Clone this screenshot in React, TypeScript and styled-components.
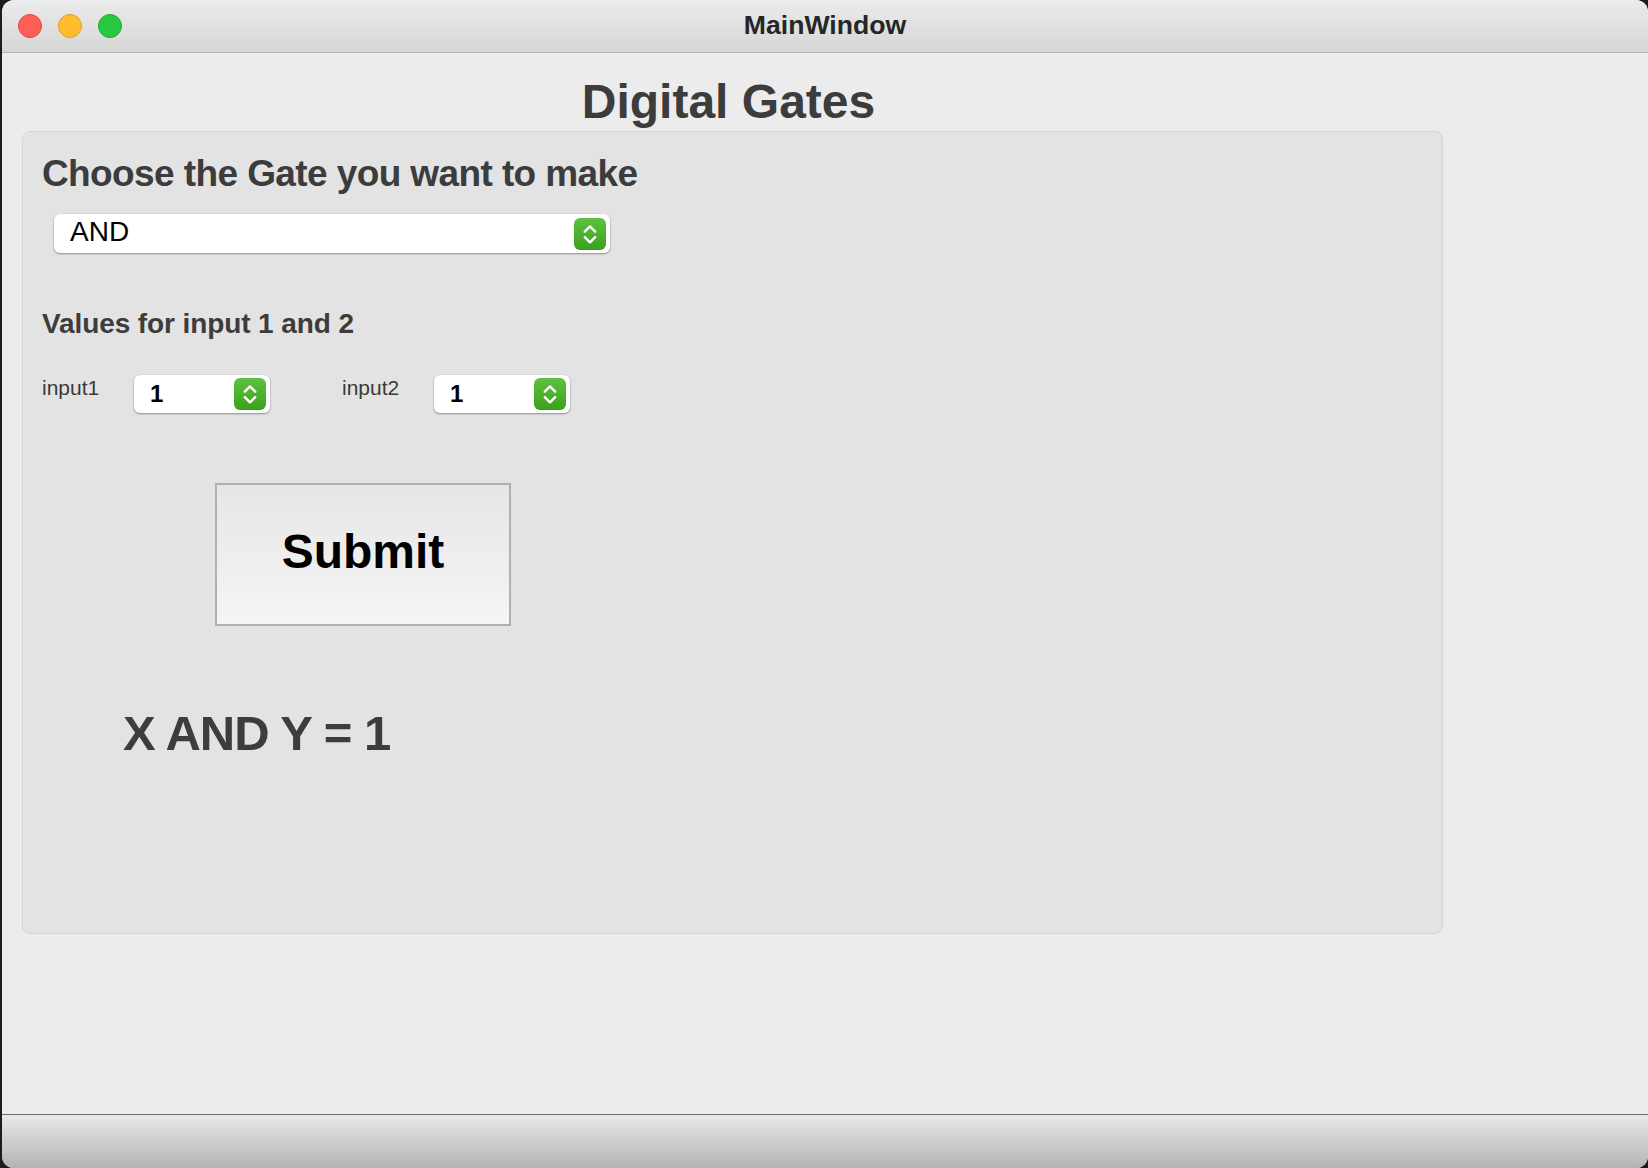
import React from 'react';
import styled, { createGlobalStyle } from 'styled-components';

const GlobalStyle = createGlobalStyle`
  html, body {
    margin: 0;
    padding: 0;
    background: #1c1c1c;
  }
  body {
    width: 1648px;
    height: 1168px;
    overflow: hidden;
    font-family: "Liberation Sans", Arial, Helvetica, sans-serif;
  }
  * { box-sizing: border-box; }
`;

const Desktop = styled.div`
  width: 1648px;
  height: 1168px;
  display: flex;
  padding-left: 2px;
  background: #1c1c1c;
`;

const Window = styled.div`
  flex: 1;
  display: flex;
  flex-direction: column;
  border-radius: 12px;
  overflow: hidden;
  background: #ececec;
`;

const TitleBar = styled.div`
  height: 53px;
  flex: none;
  display: grid;
  grid-template-columns: 1fr auto 1fr;
  align-items: center;
  padding: 0 16px 1px;
  background: linear-gradient(#ebebeb, #d6d6d6);
  border-bottom: 1px solid #b6b6b6;
`;

const Lights = styled.div`
  display: flex;
  gap: 16px;
  align-items: center;
`;

const Light = styled.span<{ $fill: string; $edge: string }>`
  width: 24px;
  height: 24px;
  border-radius: 50%;
  background: ${(p) => p.$fill};
  border: 1px solid ${(p) => p.$edge};
`;

const WindowTitle = styled.div`
  font-size: 26.6px;
  font-weight: 700;
  color: #262626;
`;

const Content = styled.main`
  flex: 1;
  display: flex;
  flex-direction: column;
  padding: 25px 0 0 20px;
  background: #ececec;
`;

const Heading = styled.h1`
  width: 1421px;
  margin: 0;
  text-align: center;
  font-size: 48px;
  line-height: 48px;
  font-weight: 700;
  color: #3c3c3c;
  padding-right: 8px;
`;

const GroupBox = styled.section`
  width: 1421px;
  height: 803px;
  margin-top: 5px;
  background: #e3e3e3;
  border: 1px solid #d4d4d4;
  border-radius: 8px;
  padding: 23px 0 0 19px;
  display: flex;
  flex-direction: column;
  align-items: flex-start;
`;

const SectionTitle = styled.h2`
  margin: 0;
  font-size: 37px;
  line-height: 37px;
  font-weight: 700;
  color: #3c3c3c;
  letter-spacing: -0.6px;
`;

const SubTitle = styled.h3`
  margin: 57px 0 0;
  font-size: 28px;
  line-height: 28px;
  font-weight: 700;
  color: #3c3c3c;
  letter-spacing: -0.1px;
`;

const Combo = styled.div<{ $width: number; $height: number }>`
  width: ${(p) => p.$width}px;
  height: ${(p) => p.$height}px;
  background: #fff;
  border-radius: 6px;
  box-shadow: 0 1px 2px rgba(0, 0, 0, 0.35), 0 0 0 0.5px rgba(0, 0, 0, 0.06);
  display: flex;
  align-items: center;
  justify-content: space-between;
  padding: 0 4px 0 16px;
`;

const MainCombo = styled(Combo)`
  margin: 22px 0 0 12px;
`;

const ComboText = styled.span<{ $bold?: boolean; $size: number; $lift?: number }>`
  font-size: ${(p) => p.$size}px;
  font-weight: ${(p) => (p.$bold ? 700 : 400)};
  color: #000;
  margin-bottom: ${(p) => (p.$lift ?? 0) * 2}px;
`;

const InputRow = styled.div`
  margin-top: 37px;
  display: flex;
  gap: 72px;
`;

const Field = styled.div`
  display: flex;
  align-items: flex-start;
`;

const FieldLabel = styled.label`
  width: 92px;
  padding-top: 0;
  font-size: 21px;
  line-height: 26px;
  color: #3a3a3a;
`;

const SubmitButton = styled.button`
  margin: 70px 0 0 173px;
  width: 296px;
  height: 143px;
  border: 2px solid #b0b0b0;
  border-radius: 0;
  background: linear-gradient(#e6e6e6, #f5f5f5);
  font-family: inherit;
  font-size: 48px;
  font-weight: 700;
  color: #000;
  padding: 0 0 6px;
`;

const Result = styled.div`
  margin: 83px 0 0 81px;
  font-size: 49px;
  line-height: 49px;
  font-weight: 700;
  color: #3d3d3d;
  letter-spacing: -1px;
`;

const StatusBar = styled.footer`
  height: 54px;
  flex: none;
  border-top: 1px solid #6e6e6e;
  background: linear-gradient(#e8e8e8, #b4b4b4);
`;

const Stepper = ({ id }: { id: string }) => (
  <svg width={32} height={32} viewBox="0 0 32 32">
    <defs>
      <linearGradient id={id} x1="0" y1="0" x2="0" y2="1">
        <stop offset="0" stopColor="#5fc241" />
        <stop offset="1" stopColor="#3aa11b" />
      </linearGradient>
    </defs>
    <rect x="0" y="0" width="32" height="32" rx="6" fill={`url(#${id})`} />
    <path d="M10.8 13.6 L16 8.4 L21.2 13.6" fill="none" stroke="#fff" strokeWidth="2.4" strokeLinecap="round" strokeLinejoin="round" />
    <path d="M10.8 19.2 L16 24.4 L21.2 19.2" fill="none" stroke="#fff" strokeWidth="2.4" strokeLinecap="round" strokeLinejoin="round" />
  </svg>
);

export default function App() {
  return (
    <>
      <GlobalStyle />
      <Desktop>
        <Window>
          <TitleBar>
            <Lights>
              <Light $fill="#ff5f57" $edge="#e2463f" />
              <Light $fill="#febc2e" $edge="#dfa023" />
              <Light $fill="#28c840" $edge="#1fa932" />
            </Lights>
            <WindowTitle>MainWindow</WindowTitle>
            <span />
          </TitleBar>
          <Content>
            <Heading>Digital Gates</Heading>
            <GroupBox>
              <SectionTitle>Choose the Gate you want to make</SectionTitle>
              <MainCombo $width={556} $height={39}>
                <ComboText $size={28} $lift={2}>AND</ComboText>
                <Stepper id="step-gate" />
              </MainCombo>
              <SubTitle>Values for input 1 and 2</SubTitle>
              <InputRow>
                <Field>
                  <FieldLabel>input1</FieldLabel>
                  <Combo $width={136} $height={38}>
                    <ComboText $bold $size={24}>1</ComboText>
                    <Stepper id="step-in1" />
                  </Combo>
                </Field>
                <Field>
                  <FieldLabel>input2</FieldLabel>
                  <Combo $width={136} $height={38}>
                    <ComboText $bold $size={24}>1</ComboText>
                    <Stepper id="step-in2" />
                  </Combo>
                </Field>
              </InputRow>
              <SubmitButton>Submit</SubmitButton>
              <Result>X AND Y = 1</Result>
            </GroupBox>
          </Content>
          <StatusBar />
        </Window>
      </Desktop>
    </>
  );
}
